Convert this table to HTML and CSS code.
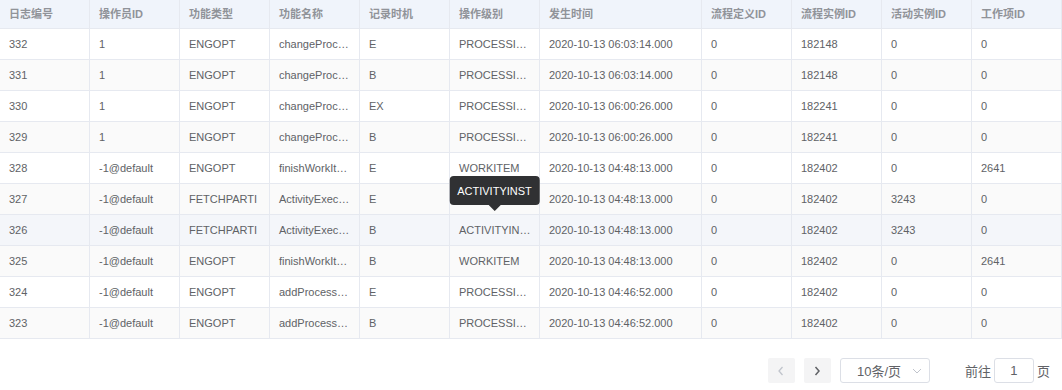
FILE: index.html
```html
<!DOCTYPE html>
<html lang="zh-CN">
<head>
<meta charset="utf-8">
<title>日志</title>
<link rel="stylesheet" href="styles.css">
</head>
<body>
<div class="table">
  <div class="row head">
    <div class="th"><div class="cell">日志编号</div></div>
    <div class="th"><div class="cell">操作员ID</div></div>
    <div class="th"><div class="cell">功能类型</div></div>
    <div class="th"><div class="cell">功能名称</div></div>
    <div class="th"><div class="cell">记录时机</div></div>
    <div class="th"><div class="cell">操作级别</div></div>
    <div class="th"><div class="cell">发生时间</div></div>
    <div class="th"><div class="cell">流程定义ID</div></div>
    <div class="th"><div class="cell">流程实例ID</div></div>
    <div class="th"><div class="cell">活动实例ID</div></div>
    <div class="th"><div class="cell">工作项ID</div></div>
  </div>

  <div class="row">
    <div class="td"><div class="cell">332</div></div>
    <div class="td"><div class="cell">1</div></div>
    <div class="td"><div class="cell">ENGOPT</div></div>
    <div class="td"><div class="cell" title="changeProcessState">changeProc…</div></div>
    <div class="td"><div class="cell">E</div></div>
    <div class="td"><div class="cell" title="PROCESSINST">PROCESSI…</div></div>
    <div class="td"><div class="cell">2020-10-13 06:03:14.000</div></div>
    <div class="td"><div class="cell">0</div></div>
    <div class="td"><div class="cell">182148</div></div>
    <div class="td"><div class="cell">0</div></div>
    <div class="td"><div class="cell">0</div></div>
  </div>
  <div class="row striped">
    <div class="td"><div class="cell">331</div></div>
    <div class="td"><div class="cell">1</div></div>
    <div class="td"><div class="cell">ENGOPT</div></div>
    <div class="td"><div class="cell" title="changeProcessState">changeProc…</div></div>
    <div class="td"><div class="cell">B</div></div>
    <div class="td"><div class="cell" title="PROCESSINST">PROCESSI…</div></div>
    <div class="td"><div class="cell">2020-10-13 06:03:14.000</div></div>
    <div class="td"><div class="cell">0</div></div>
    <div class="td"><div class="cell">182148</div></div>
    <div class="td"><div class="cell">0</div></div>
    <div class="td"><div class="cell">0</div></div>
  </div>
  <div class="row">
    <div class="td"><div class="cell">330</div></div>
    <div class="td"><div class="cell">1</div></div>
    <div class="td"><div class="cell">ENGOPT</div></div>
    <div class="td"><div class="cell" title="changeProcessState">changeProc…</div></div>
    <div class="td"><div class="cell">EX</div></div>
    <div class="td"><div class="cell" title="PROCESSINST">PROCESSI…</div></div>
    <div class="td"><div class="cell">2020-10-13 06:00:26.000</div></div>
    <div class="td"><div class="cell">0</div></div>
    <div class="td"><div class="cell">182241</div></div>
    <div class="td"><div class="cell">0</div></div>
    <div class="td"><div class="cell">0</div></div>
  </div>
  <div class="row striped">
    <div class="td"><div class="cell">329</div></div>
    <div class="td"><div class="cell">1</div></div>
    <div class="td"><div class="cell">ENGOPT</div></div>
    <div class="td"><div class="cell" title="changeProcessState">changeProc…</div></div>
    <div class="td"><div class="cell">B</div></div>
    <div class="td"><div class="cell" title="PROCESSINST">PROCESSI…</div></div>
    <div class="td"><div class="cell">2020-10-13 06:00:26.000</div></div>
    <div class="td"><div class="cell">0</div></div>
    <div class="td"><div class="cell">182241</div></div>
    <div class="td"><div class="cell">0</div></div>
    <div class="td"><div class="cell">0</div></div>
  </div>
  <div class="row">
    <div class="td"><div class="cell">328</div></div>
    <div class="td"><div class="cell">-1@default</div></div>
    <div class="td"><div class="cell">ENGOPT</div></div>
    <div class="td"><div class="cell" title="finishWorkItem">finishWorkIt…</div></div>
    <div class="td"><div class="cell">E</div></div>
    <div class="td"><div class="cell">WORKITEM</div></div>
    <div class="td"><div class="cell">2020-10-13 04:48:13.000</div></div>
    <div class="td"><div class="cell">0</div></div>
    <div class="td"><div class="cell">182402</div></div>
    <div class="td"><div class="cell">0</div></div>
    <div class="td"><div class="cell">2641</div></div>
  </div>
  <div class="row striped">
    <div class="td"><div class="cell">327</div></div>
    <div class="td"><div class="cell">-1@default</div></div>
    <div class="td"><div class="cell">FETCHPARTI</div></div>
    <div class="td"><div class="cell" title="ActivityExecute">ActivityExec…</div></div>
    <div class="td"><div class="cell">E</div></div>
    <div class="td"><div class="cell hidden-under" title="ACTIVITYINST">ACTIVITYIN…</div></div>
    <div class="td"><div class="cell">2020-10-13 04:48:13.000</div></div>
    <div class="td"><div class="cell">0</div></div>
    <div class="td"><div class="cell">182402</div></div>
    <div class="td"><div class="cell">3243</div></div>
    <div class="td"><div class="cell">0</div></div>
  </div>
  <div class="row hover">
    <div class="td"><div class="cell">326</div></div>
    <div class="td"><div class="cell">-1@default</div></div>
    <div class="td"><div class="cell">FETCHPARTI</div></div>
    <div class="td"><div class="cell" title="ActivityExecute">ActivityExec…</div></div>
    <div class="td"><div class="cell">B</div></div>
    <div class="td anchor"><div class="cell">ACTIVITYIN…</div><div class="tooltip" role="tooltip">ACTIVITYINST</div></div>
    <div class="td"><div class="cell">2020-10-13 04:48:13.000</div></div>
    <div class="td"><div class="cell">0</div></div>
    <div class="td"><div class="cell">182402</div></div>
    <div class="td"><div class="cell">3243</div></div>
    <div class="td"><div class="cell">0</div></div>
  </div>
  <div class="row striped">
    <div class="td"><div class="cell">325</div></div>
    <div class="td"><div class="cell">-1@default</div></div>
    <div class="td"><div class="cell">ENGOPT</div></div>
    <div class="td"><div class="cell" title="finishWorkItem">finishWorkIt…</div></div>
    <div class="td"><div class="cell">B</div></div>
    <div class="td"><div class="cell">WORKITEM</div></div>
    <div class="td"><div class="cell">2020-10-13 04:48:13.000</div></div>
    <div class="td"><div class="cell">0</div></div>
    <div class="td"><div class="cell">182402</div></div>
    <div class="td"><div class="cell">0</div></div>
    <div class="td"><div class="cell">2641</div></div>
  </div>
  <div class="row">
    <div class="td"><div class="cell">324</div></div>
    <div class="td"><div class="cell">-1@default</div></div>
    <div class="td"><div class="cell">ENGOPT</div></div>
    <div class="td"><div class="cell" title="addProcessInst">addProcess…</div></div>
    <div class="td"><div class="cell">E</div></div>
    <div class="td"><div class="cell" title="PROCESSINST">PROCESSI…</div></div>
    <div class="td"><div class="cell">2020-10-13 04:46:52.000</div></div>
    <div class="td"><div class="cell">0</div></div>
    <div class="td"><div class="cell">182402</div></div>
    <div class="td"><div class="cell">0</div></div>
    <div class="td"><div class="cell">0</div></div>
  </div>
  <div class="row striped">
    <div class="td"><div class="cell">323</div></div>
    <div class="td"><div class="cell">-1@default</div></div>
    <div class="td"><div class="cell">ENGOPT</div></div>
    <div class="td"><div class="cell" title="addProcessInst">addProcess…</div></div>
    <div class="td"><div class="cell">B</div></div>
    <div class="td"><div class="cell" title="PROCESSINST">PROCESSI…</div></div>
    <div class="td"><div class="cell">2020-10-13 04:46:52.000</div></div>
    <div class="td"><div class="cell">0</div></div>
    <div class="td"><div class="cell">182402</div></div>
    <div class="td"><div class="cell">0</div></div>
    <div class="td"><div class="cell">0</div></div>
  </div>
</div>

<div class="pager">
  <button class="pbtn disabled" type="button" aria-label="上一页">
    <svg width="8" height="10" viewBox="0 0 8 10"><polyline points="5.5,1 2,5 5.5,9" fill="none" stroke="#c0c4cc" stroke-width="1.3"/></svg>
  </button>
  <button class="pbtn" type="button" aria-label="下一页">
    <svg width="8" height="10" viewBox="0 0 8 10"><polyline points="2.5,1 6,5 2.5,9" fill="none" stroke="#606266" stroke-width="1.5"/></svg>
  </button>
  <div class="select">
    <span class="select-text">10条/页</span>
    <svg class="caret" width="10" height="6" viewBox="0 0 10 6"><polyline points="1,1 5,5 9,1" fill="none" stroke="#c0c4cc" stroke-width="1"/></svg>
  </div>
  <div class="jump">
    <span>前往</span>
    <span class="jump-input">1</span>
    <span>页</span>
  </div>
</div>
</body>
</html>
```
FILE: styles.css
```css
* { box-sizing: border-box; }
html, body {
  margin: 0;
  padding: 0;
  background: #fff;
}
body {
  width: 1062px;
  height: 390px;
  overflow: hidden;
  font-family: "Liberation Sans", "Noto Sans CJK SC", sans-serif;
  font-size: 11px;
  color: #606266;
}
.table {
  width: 1062px;
}
.row {
  display: grid;
  grid-template-columns: repeat(6, 90px) 162px repeat(4, 90px);
  height: 31px;
  background: #fff;
}
.row.head {
  height: 29px;
  background: #f0f4fb;
}
.row.striped { background: #fafafa; }
.row.hover { background: #f4f6fa; }
.th, .td {
  border-right: 1px solid #e6e9f0;
  border-bottom: 1px solid #e6e9f0;
  display: flex;
  align-items: center;
  min-width: 0;
  position: relative;
}
.th {
  color: #909399;
  font-weight: bold;
}
.cell {
  width: 100%;
  padding: 0 8px 0 9px;
  white-space: nowrap;
  overflow: hidden;
  text-overflow: ellipsis;
  line-height: 16px;
}
.hidden-under {
  visibility: hidden;
}
.tooltip {
  position: absolute;
  left: 50%;
  bottom: calc(100% + 10px);
  transform: translateX(-50%);
  height: 29px;
  padding: 0 8px;
  display: flex;
  align-items: center;
  white-space: nowrap;
  background: #303133;
  color: #fff;
  border-radius: 4px;
  font-size: 11px;
  z-index: 2;
}
.tooltip::after {
  content: "";
  position: absolute;
  left: 50%;
  top: 100%;
  margin-left: -6px;
  border-left: 6px solid transparent;
  border-right: 6px solid transparent;
  border-top: 6px solid #303133;
}
.pager {
  display: flex;
  justify-content: flex-end;
  align-items: center;
  height: 25px;
  margin-top: 19px;
  padding-right: 12px;
  font-size: 13px;
  color: #606266;
}
.pbtn {
  width: 27px;
  height: 25px;
  margin-right: 9px;
  padding: 0;
  border: 0;
  border-radius: 2px;
  background: #f4f4f5;
  display: flex;
  align-items: center;
  justify-content: center;
}
.select {
  width: 90px;
  height: 25px;
  border: 1px solid #dcdfe6;
  border-radius: 3px;
  display: flex;
  align-items: center;
  padding-left: 16px;
  padding-right: 6px;
  justify-content: space-between;
}
.select-text { color: #606266; }
.caret { margin-right: 1px; }
.jump {
  display: flex;
  align-items: center;
  margin-left: 35px;
  gap: 3px;
}
.jump-input {
  width: 40px;
  height: 25px;
  border: 1px solid #dcdfe6;
  border-radius: 3px;
  display: flex;
  align-items: center;
  justify-content: center;
}
```
